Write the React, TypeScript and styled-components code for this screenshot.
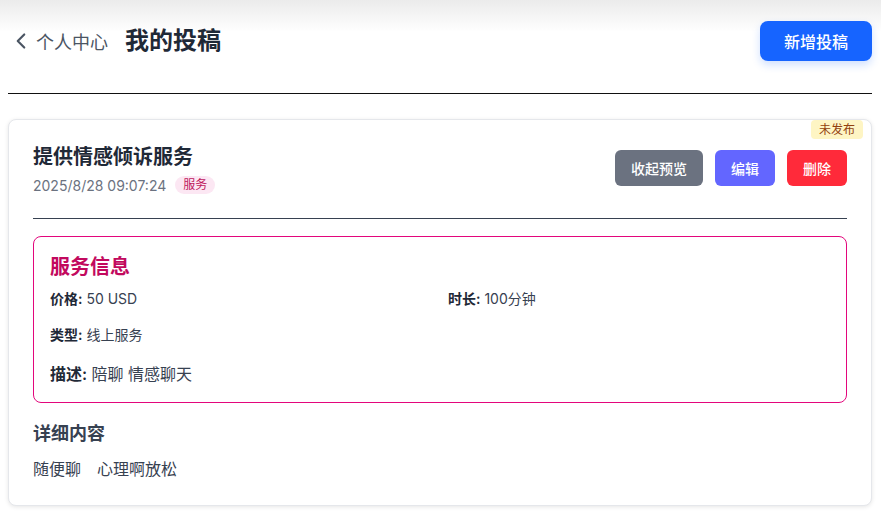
import React from 'react';
import styled, { createGlobalStyle } from 'styled-components';
import { ChevronLeft } from 'lucide-react';

interface Service {
  price: string;
  duration: string;
  kind: string;
  description: string;
}

interface Post {
  id: string;
  title: string;
  createdAt: string;
  category: string;
  status: string;
  service: Service;
  detail: string;
}

const post: Post = {
  id: '1',
  title: '提供情感倾诉服务',
  createdAt: '2025/8/28 09:07:24',
  category: '服务',
  status: '未发布',
  service: {
    price: '50 USD',
    duration: '100分钟',
    kind: '线上服务',
    description: '陪聊 情感聊天',
  },
  detail: '随便聊    心理啊放松',
};

const GlobalStyle = createGlobalStyle`
  html, body {
    margin: 0;
    padding: 0;
    background: #fff;
  }
  body {
    font-family: Inter, "Noto Sans CJK SC", sans-serif;
    color: #1f2937;
    background: linear-gradient(to bottom, #ebebeb 0px, #ffffff 32px) no-repeat;
  }
`;

const Page = styled.div`
  padding: 0 9px 20px 8px;
`;

const Header = styled.header`
  display: flex;
  align-items: center;
  justify-content: space-between;
  padding: 21px 0 32px;
  border-bottom: 1px solid #111;
`;

const HeaderLeft = styled.div`
  display: flex;
  align-items: center;
`;

const BackLink = styled.button`
  display: flex;
  align-items: center;
  gap: 2px;
  background: none;
  border: none;
  padding: 0;
  font: inherit;
  font-size: 18px;
  color: #4b5563;
  cursor: pointer;
`;

const PageTitle = styled.h1`
  margin: 0 0 0 17px;
  font-size: 24px;
  font-weight: 700;
  color: #1f2937;
  line-height: 32px;
`;

const PrimaryButton = styled.button`
  height: 40px;
  padding: 0 24px;
  border: none;
  border-radius: 8px;
  background: #1664ff;
  color: #fff;
  font: inherit;
  font-size: 16px;
  font-weight: 500;
  box-shadow: 0 4px 8px rgba(22, 100, 255, 0.2);
  cursor: pointer;
`;

const Card = styled.article`
  position: relative;
  margin-top: 25px;
  padding: 23px 24px 24px;
  border: 1px solid #e5e7eb;
  border-radius: 8px;
  box-shadow: 0 1px 4px rgba(0, 0, 0, 0.1);
  background: #fff;
`;

const StatusBadge = styled.span`
  position: absolute;
  top: 0;
  right: 8px;
  padding: 0 8px;
  line-height: 19px;
  font-size: 12px;
  color: #92400e;
  background: #fef5c4;
  border-radius: 4px;
`;

const CardHeader = styled.div`
  display: flex;
  align-items: center;
  justify-content: space-between;
  padding-bottom: 24px;
  border-bottom: 1px solid #374151;
`;

const PostTitle = styled.h2`
  margin: 0;
  font-size: 20px;
  font-weight: 700;
  line-height: 28px;
  color: #1f2937;
`;

const MetaRow = styled.div`
  display: flex;
  align-items: center;
  gap: 9px;
  margin-top: 5px;
  font-size: 14px;
  color: #6b7280;
`;

const Tag = styled.span`
  padding: 0 8px;
  line-height: 18px;
  font-size: 12px;
  color: #be185d;
  background: #fce7f3;
  border-radius: 9px;
`;

const Actions = styled.div`
  display: flex;
  gap: 12px;
  margin-top: -1px;
`;

const ActionButton = styled.button<{ $color: string }>`
  height: 36px;
  padding: 0 16px;
  border: none;
  border-radius: 6px;
  background: ${(p) => p.$color};
  color: #fff;
  font: inherit;
  font-size: 14px;
  font-weight: 500;
  cursor: pointer;
`;

const InfoBox = styled.section`
  margin-top: 17px;
  padding: 16px;
  border: 1px solid #e3067c;
  border-radius: 8px;
`;

const InfoTitle = styled.h3`
  margin: 0;
  font-size: 20px;
  font-weight: 700;
  line-height: 28px;
  color: #c2095e;
`;

const InfoGrid = styled.div`
  display: grid;
  grid-template-columns: 1fr 1fr;
  column-gap: 16px;
  row-gap: 16px;
  margin-top: 8px;
`;

const InfoItem = styled.div<{ $wide?: boolean; $large?: boolean }>`
  grid-column: ${(p) => (p.$wide ? '1 / -1' : 'auto')};
  font-size: ${(p) => (p.$large ? '16px' : '14px')};
  line-height: ${(p) => (p.$large ? '24px' : '20px')};
  margin-top: ${(p) => (p.$large ? '1px' : '0')};
  color: #374151;

  strong {
    font-weight: 600;
    color: #1f2937;
  }
`;

const SectionTitle = styled.h3`
  margin: 17px 0 0;
  font-size: 18px;
  font-weight: 700;
  line-height: 28px;
  color: #374151;
`;

const DetailText = styled.p`
  margin: 9px 0 0;
  font-size: 16px;
  line-height: 24px;
  color: #374151;
  white-space: pre-wrap;
  word-spacing: -0.5px;
`;

export default function App() {
  const { service } = post;
  return (
    <>
      <GlobalStyle />
      <Page>
        <Header>
          <HeaderLeft>
            <BackLink>
              <ChevronLeft size={26} strokeWidth={2} color="#4b5563" />
              个人中心
            </BackLink>
            <PageTitle>我的投稿</PageTitle>
          </HeaderLeft>
          <PrimaryButton>新增投稿</PrimaryButton>
        </Header>

        <Card key={post.id}>
          <StatusBadge>{post.status}</StatusBadge>
          <CardHeader>
            <div>
              <PostTitle>{post.title}</PostTitle>
              <MetaRow>
                {post.createdAt}
                <Tag>{post.category}</Tag>
              </MetaRow>
            </div>
            <Actions>
              <ActionButton $color="#6b7280">收起预览</ActionButton>
              <ActionButton $color="#6366ff">编辑</ActionButton>
              <ActionButton $color="#ff2a3a">删除</ActionButton>
            </Actions>
          </CardHeader>

          <InfoBox>
            <InfoTitle>服务信息</InfoTitle>
            <InfoGrid>
              <InfoItem>
                <strong>价格:</strong> {service.price}
              </InfoItem>
              <InfoItem>
                <strong>时长:</strong> {service.duration}
              </InfoItem>
              <InfoItem $wide>
                <strong>类型:</strong> {service.kind}
              </InfoItem>
              <InfoItem $wide $large>
                <strong>描述:</strong> {service.description}
              </InfoItem>
            </InfoGrid>
          </InfoBox>

          <SectionTitle>详细内容</SectionTitle>
          <DetailText>{post.detail}</DetailText>
        </Card>
      </Page>
    </>
  );
}
